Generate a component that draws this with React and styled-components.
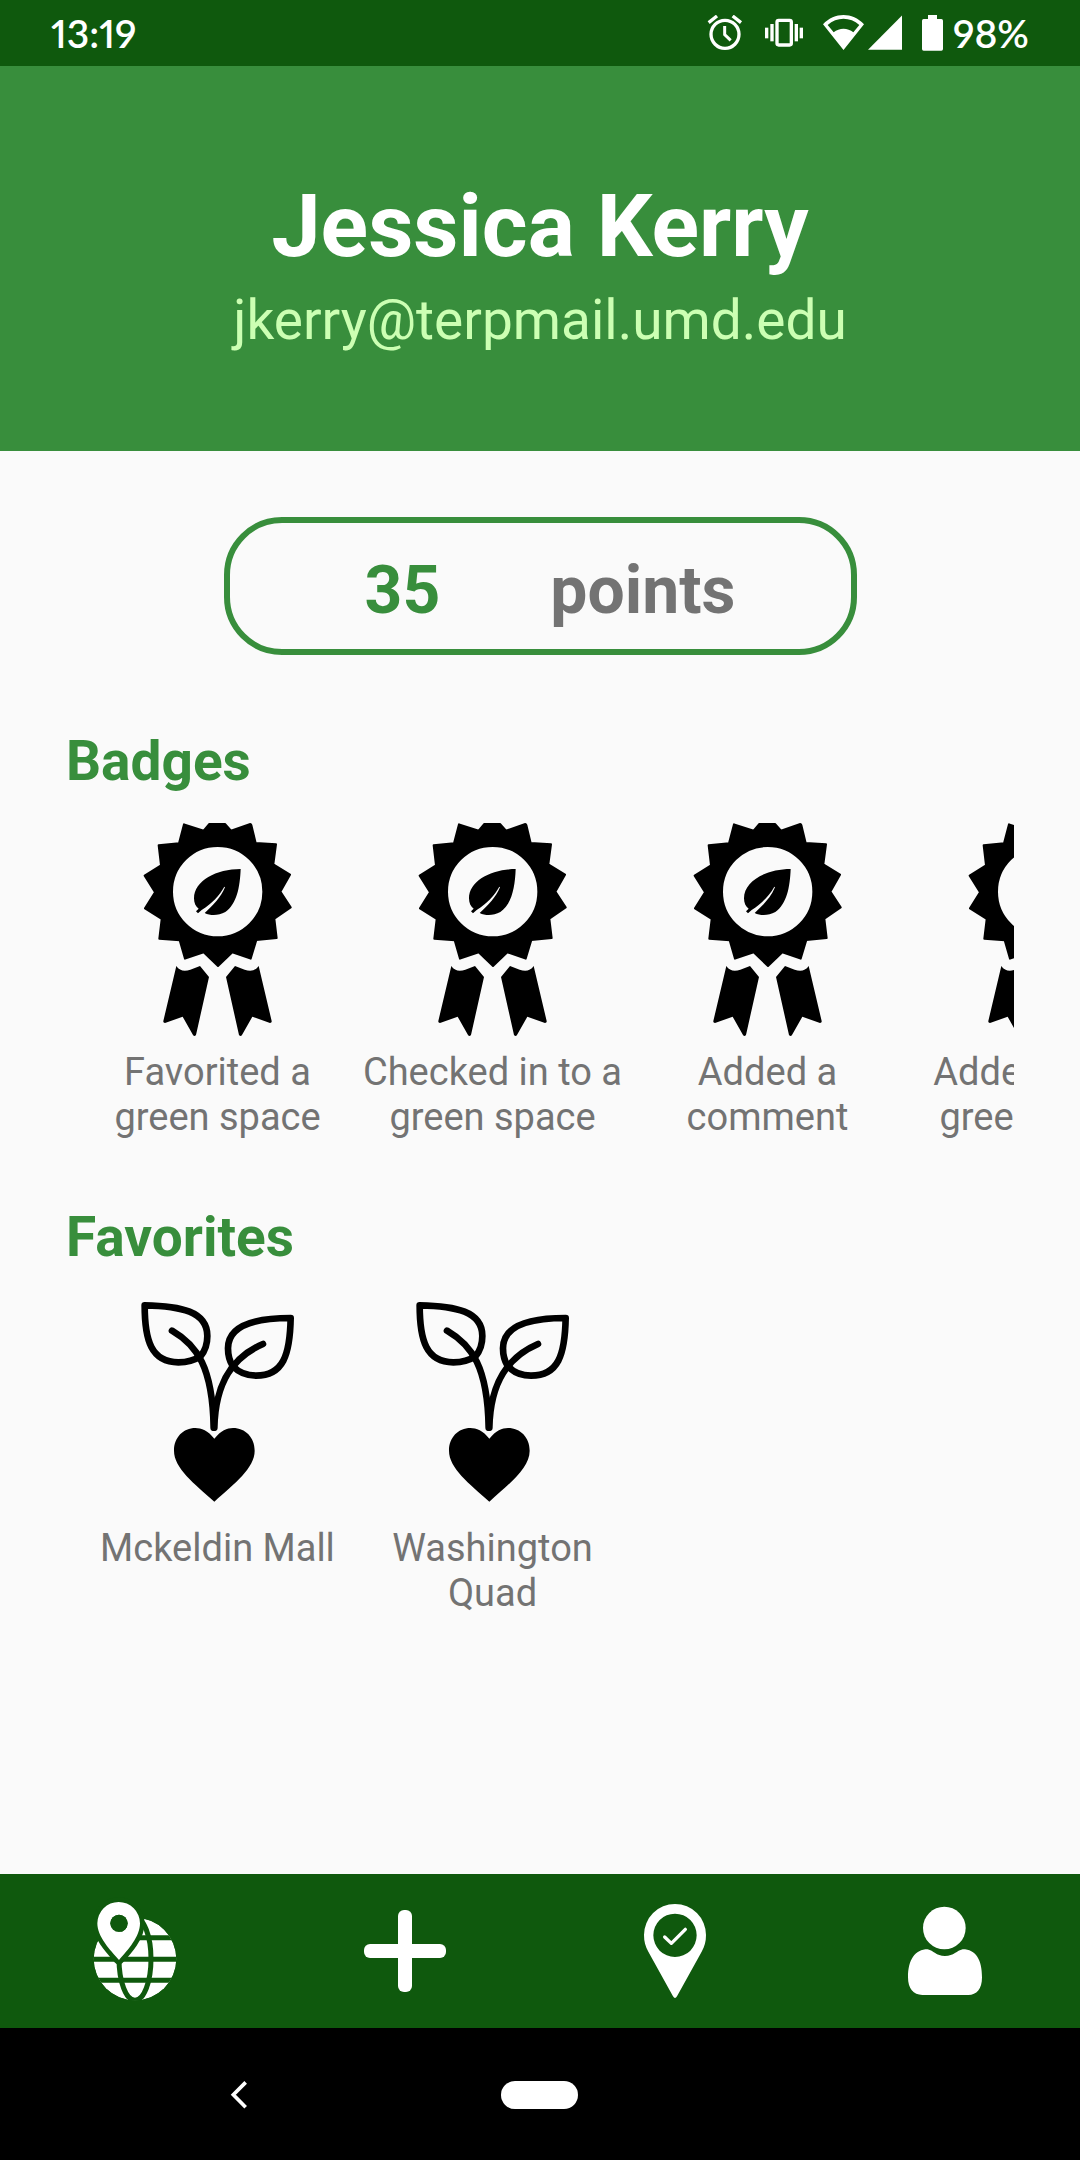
import React from "react";
import styled, { createGlobalStyle } from "styled-components";

const color = {
  primary: "#388e3c",
  dark: "#0f590d",
  page: "#fafafa",
  muted: "#737373",
  mint: "#ccffb3",
};

const GlobalStyle = createGlobalStyle`
  *, *::before, *::after { box-sizing: border-box; }
  body {
    margin: 0;
    background: ${color.page};
    font-family: Roboto, "Liberation Sans", sans-serif;
  }
  h1, h2, p, ul { margin: 0; padding: 0; }
  button { border: 0; padding: 0; background: none; font: inherit; cursor: pointer; }
  svg { display: block; flex: none; }
`;

const Screen = styled.div`
  min-height: 100vh;
  display: flex;
  flex-direction: column;
`;

const StatusBar = styled.div`
  display: flex;
  align-items: center;
  justify-content: space-between;
  height: 66px;
  padding: 0 51px;
  background: ${color.dark};
  color: #fff;
  font-family: Lato, sans-serif;
  font-size: 39px;
  font-weight: 600;
  line-height: 48px;
  font-variant-numeric: proportional-nums;
`;

const StatusGroup = styled.div`
  display: flex;
  align-items: center;
  gap: ${(p) => p.$gap}px;
`;

const Header = styled.header`
  display: flex;
  flex-direction: column;
  align-items: center;
  gap: 10px;
  padding: 108px 24px 99px;
  background: ${color.primary};
`;

const Name = styled.h1`
  color: #fff;
  font-size: 88px;
  font-weight: 700;
  line-height: 104px;
`;

const Email = styled.p`
  color: ${color.mint};
  font-size: 55px;
  line-height: 64px;
`;

const Content = styled.main`
  flex: 1;
  display: flex;
  flex-direction: column;
  padding: 66px 66px 24px;
`;

const Points = styled.p`
  align-self: center;
  display: flex;
  justify-content: center;
  gap: 110px;
  width: 100%;
  max-width: 633px;
  padding: 29px 0 20px 20px;
  border: 6px solid ${color.primary};
  border-radius: 58px;
  color: ${color.muted};
  font-size: 66px;
  font-weight: 700;
  line-height: 77px;
`;

const Score = styled.span`
  color: ${color.primary};
`;

const Section = styled.section`
  margin-top: ${(p) => p.$space}px;
`;

const Heading = styled.h2`
  color: ${color.primary};
  font-size: 55px;
  font-weight: 700;
  line-height: 64px;
`;

const Strip = styled.ul`
  display: flex;
  padding: 27px 0 0 14px;
  list-style: none;
  overflow-x: auto;
  scrollbar-width: none;
`;

const Item = styled.li`
  flex: none;
  display: flex;
  flex-direction: column;
  align-items: center;
  gap: 10px;
  width: 275px;
  color: ${color.muted};
  font-size: 38px;
  line-height: 45px;
  text-align: center;
`;

const Label = styled.span`
  height: 89px;
`;

const TabBar = styled.nav`
  display: flex;
  height: 154px;
  background: ${color.dark};
`;

const Tab = styled.button`
  flex: 1;
  display: flex;
  align-items: center;
  justify-content: center;
`;

const SystemBar = styled.div`
  display: grid;
  grid-template-columns: repeat(3, 1fr);
  place-items: center;
  height: 132px;
  padding: 2px 88px 0;
  background: #000;
`;

const HomePill = styled.button`
  && {
    width: 77px;
    height: 28px;
    border-radius: 14px;
    background: #fff;
  }
`;

const AlarmIcon = () => (
  <svg width="40" height="36" viewBox="65 45 120 108" fill="none" stroke="#fff">
    <circle cx="125" cy="103" r="42" strokeWidth="10" />
    <path d="M124 78V104L142 121" strokeWidth="9" />
    <path d="M76 68L101 48M148 48L173 68" strokeWidth="10" />
  </svg>
);

const VibrateIcon = () => (
  <svg width="38" height="36" viewBox="252 45 114 108" fill="#fff">
    <rect x="288" y="61" width="43" height="74" rx="5" fill="none" stroke="#fff" strokeWidth="10" />
    <rect x="252" y="83" width="10" height="32" />
    <rect x="268" y="72" width="10" height="52" />
    <rect x="341" y="72" width="10" height="52" />
    <rect x="356" y="83" width="10" height="32" />
  </svg>
);

const WifiIcon = () => (
  <svg width="41" height="36" viewBox="426 45 123 108" fill="#fff" fillRule="evenodd">
    <path d="M426 73C461 36 514 36 549 73L487.500 150ZM440 75L458 97C475 83 500 83 517 97L535 75C508 50 467 50 440 75Z" />
  </svg>
);

const SignalIcon = () => (
  <svg width="34" height="36" viewBox="560 45 103 108" fill="#fff">
    <path d="M663 46V150H560Z" />
  </svg>
);

const BatteryIcon = () => (
  <svg width="21" height="36" viewBox="723 45 63 108" fill="#fff">
    <path d="M741 45H768V57H781Q786 57 786 62V147Q786 152 781 152H728Q723 152 723 147V62Q723 57 728 57H741Z" />
  </svg>
);

const BadgeIcon = () => (
  <svg width="220" height="220" viewBox="174 300 660 660">
    <path
      d="M461 332L478 312H525L543 332L601 312Q603 312 604 315L617 369L678 373L670 433L720 464L691 515L722 562L673 596L680 654L619 660L602 716L547 697L504 738L461 697L405 716L389 661L328 656L335 597L285 565L315 517L284 467L333 436L326 376L387 370L402 313ZM503 378A137 137 0 1 0 503 652A137 137 0 1 0 503 378Z"
      fillRule="evenodd"
      stroke="#000"
      strokeWidth="6"
      strokeLinejoin="round"
    />
    <path d="M572 447C500 447 432 482 432 535C432 549 437 560 446 566L438 574L444 580L455 570C487 549 508 527 523 500L525 502C512 533 490 555 464 579C482 588 506 587 526 576C560 553 570 502 572 447Z" />
    <path d="M379 738C389 753 404 755 421 749L450 738L477 771L438 945Q433 951 429 945L398 890L345 909Q339 908 340 903Z" />
    <path d="M626 738C616 753 601 755 584 749L555 738L528 771L567 945Q572 951 576 945L607 890L660 909Q666 908 665 903Z" />
  </svg>
);

const SproutIcon = () => (
  <svg width="220" height="220" viewBox="174 288 660 660">
    <g fill="none" stroke="#000" strokeWidth="20" strokeLinecap="round" strokeLinejoin="round">
      <path d="M284 316C392 318 472 334 472 408C472 438 464 454 452 468C432 482 410 487 385 487C304 487 284 422 284 316Z" />
      <path d="M722 354C618 354 534 374 534 445C534 468 539 484 548 498C566 517 590 527 618 527C700 527 720 464 722 354Z" />
      <path d="M366 392C440 435 488 500 491 683" />
      <path d="M639 432C550 470 496 545 493 683" />
    </g>
    <path d="M493 716C474 692 454 684 436 684C400 684 372 712 372 752C372 804 432 850 493 905C554 850 614 804 614 752C614 712 586 684 549 684C531 684 513 692 493 716Z" />
  </svg>
);

const GlobePinIcon = () => (
  <svg width="110" height="110" viewBox="60 108 330 330" aria-hidden="true">
    <clipPath id="globe">
      <circle cx="225" cy="297" r="124" />
    </clipPath>
    <g clipPath="url(#globe)">
      <circle cx="225" cy="297" r="124" fill="#fff" />
      <g fill="none" stroke={color.dark} strokeWidth="15">
        <path d="M90 233H360M90 298H360M90 361H360" />
        <ellipse cx="225" cy="297" rx="48" ry="124" />
      </g>
    </g>
    <path
      d="M177 300C150 270 112 230 112 190A64 64 0 0 1 240 190C240 230 204 270 177 300Z"
      fill="none"
      stroke={color.dark}
      strokeWidth="28"
      strokeLinejoin="round"
    />
    <path
      d="M177 300C150 270 112 230 112 190A64 64 0 0 1 240 190C240 230 204 270 177 300ZM177 164A26 26 0 1 0 177 216A26 26 0 1 0 177 164Z"
      fill="#fff"
      fillRule="evenodd"
    />
    <circle cx="177" cy="190" r="26" fill={color.dark} />
  </svg>
);

const PlusIcon = () => (
  <svg width="110" height="110" viewBox="870 108 330 330" fill="#fff" aria-hidden="true">
    <rect x="1014" y="150" width="42" height="246" rx="18" />
    <rect x="912" y="252" width="246" height="42" rx="18" />
  </svg>
);

const CheckPinIcon = () => (
  <svg width="110" height="110" viewBox="60 108 330 330" aria-hidden="true">
    <path
      d="M132 225A93 93 0 0 1 318 225C318 245 314 259 305 275L231 409Q225 419 219 409L145 275C136 259 132 245 132 225ZM225 161A65 65 0 1 0 225 291A65 65 0 1 0 225 161Z"
      fill="#fff"
      fillRule="evenodd"
    />
    <path d="M194 231L214 250L256 208" fill="none" stroke="#fff" strokeWidth="10" strokeLinecap="round" strokeLinejoin="round" />
  </svg>
);

const PersonIcon = () => (
  <svg width="110" height="110" viewBox="870 108 330 330" fill="#fff" aria-hidden="true">
    <circle cx="1033" cy="204" r="64" />
    <path d="M983 268C1001 272 1008 288 1035 288C1062 288 1070 272 1088 268C1128 268 1146 300 1146 352C1146 388 1130 405 1105 405H967C940 405 924 385 924 352C924 300 945 268 983 268Z" />
  </svg>
);

const BackIcon = () => (
  <svg width="18" height="28" viewBox="90 122 54 84" fill="none" stroke="#fff" strokeWidth="11" aria-hidden="true">
    <path d="M137 126L100 163L137 201" />
  </svg>
);

const badges = [
  "Favorited a green space",
  "Checked in to a green space",
  "Added a comment",
  "Added a new green space",
];

const favorites = ["Mckeldin Mall", "Washington Quad"];

const tabs = [
  { label: "Map", Icon: GlobePinIcon },
  { label: "Add", Icon: PlusIcon },
  { label: "Check in", Icon: CheckPinIcon },
  { label: "Profile", Icon: PersonIcon },
];

function Collection({ title, items, Icon, space }) {
  return (
    <Section $space={space}>
      <Heading>{title}</Heading>
      <Strip>
        {items.map((text) => (
          <Item key={text}>
            <Icon />
            <Label>{text}</Label>
          </Item>
        ))}
      </Strip>
    </Section>
  );
}

export default function App() {
  return (
    <Screen>
      <GlobalStyle />
      <StatusBar>
        <span>13:19</span>
        <StatusGroup $gap={20}>
          <AlarmIcon />
          <VibrateIcon />
          <StatusGroup $gap={4}>
            <WifiIcon />
            <SignalIcon />
          </StatusGroup>
          <StatusGroup $gap={10}>
            <BatteryIcon />
            <span>98%</span>
          </StatusGroup>
        </StatusGroup>
      </StatusBar>
      <Header>
        <Name>Jessica Kerry</Name>
        <Email>jkerry@terpmail.umd.edu</Email>
      </Header>
      <Content>
        <Points>
          <Score>35</Score>
          <span>points</span>
        </Points>
        <Collection title="Badges" items={badges} Icon={BadgeIcon} space={74} />
        <Collection title="Favorites" items={favorites} Icon={SproutIcon} space={66} />
      </Content>
      <TabBar>
        {tabs.map(({ label, Icon }) => (
          <Tab key={label} type="button" aria-label={label}>
            <Icon />
          </Tab>
        ))}
      </TabBar>
      <SystemBar>
        <button type="button" aria-label="Back">
          <BackIcon />
        </button>
        <HomePill type="button" aria-label="Home" />
      </SystemBar>
    </Screen>
  );
}
